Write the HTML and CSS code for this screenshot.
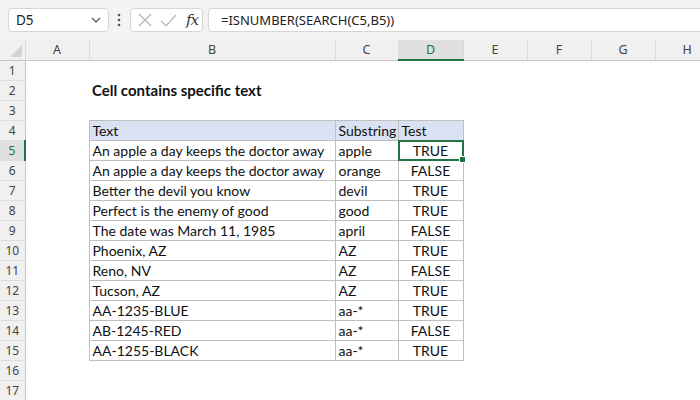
FILE: index.html
```html
<!DOCTYPE html>
<html lang="en">
<head>
  <meta charset="UTF-8">
  <title>Cell contains specific text</title>
  <link rel="stylesheet" href="styles.css">
</head>
<body>
  <div class="toolbar">
    <div class="namebox">
      <span>D5</span>
      <svg class="chevron" width="10" height="6" viewBox="0 0 10 6"><path d="M1 1l4 4 4-4" fill="none" stroke="#555" stroke-width="1.2"/></svg>
    </div>
    <svg class="dots" width="4" height="14" viewBox="0 0 4 14"><circle cx="2" cy="2" r="1.3"/><circle cx="2" cy="7" r="1.3"/><circle cx="2" cy="12" r="1.3"/></svg>
    <div class="fbuttons">
      <svg width="14" height="14" viewBox="0 0 14 14"><path d="M1 1l12 12M13 1L1 13" stroke="#b4b4b4" stroke-width="1.2" fill="none"/></svg>
      <svg width="17" height="13" viewBox="0 0 17 13"><path d="M1 7l5 5L16 1" stroke="#b4b4b4" stroke-width="1.2" fill="none"/></svg>
      <span class="fx">fx</span>
    </div>
    <div class="formula">=ISNUMBER(SEARCH(C5,B5))</div>
  </div>

  <table class="sheet">
    <colgroup>
      <col style="width:25px"><col style="width:64px"><col style="width:246px"><col style="width:63px">
      <col style="width:65px"><col style="width:64px"><col style="width:64px"><col style="width:64px"><col style="width:64px">
    </colgroup>
    <thead>
      <tr>
        <th class="corner"><svg width="12" height="12" viewBox="0 0 12 12"><path d="M12 0V12H0z" fill="#d4d4d4"/></svg></th>
        <th>A</th><th>B</th><th>C</th><th class="active">D</th><th>E</th><th>F</th><th>G</th><th>H</th>
      </tr>
    </thead>
    <tbody>
      <tr><th>1</th><td></td><td></td><td></td><td></td></tr>
      <tr><th>2</th><td></td><td class="title">Cell contains specific text</td><td></td><td></td></tr>
      <tr><th>3</th><td></td><td></td><td></td><td></td></tr>
      <tr><th>4</th><td></td><td class="t head">Text</td><td class="t head">Substring</td><td class="t head">Test</td></tr>
      <tr><th class="active">5</th><td></td><td class="t">An apple a day keeps the doctor away</td><td class="t">apple</td><td class="t c sel">TRUE</td></tr>
      <tr><th>6</th><td></td><td class="t">An apple a day keeps the doctor away</td><td class="t">orange</td><td class="t c">FALSE</td></tr>
      <tr><th>7</th><td></td><td class="t">Better the devil you know</td><td class="t">devil</td><td class="t c">TRUE</td></tr>
      <tr><th>8</th><td></td><td class="t">Perfect is the enemy of good</td><td class="t">good</td><td class="t c">TRUE</td></tr>
      <tr><th>9</th><td></td><td class="t">The date was March 11, 1985</td><td class="t">april</td><td class="t c">FALSE</td></tr>
      <tr><th>10</th><td></td><td class="t">Phoenix, AZ</td><td class="t">AZ</td><td class="t c">TRUE</td></tr>
      <tr><th>11</th><td></td><td class="t">Reno, NV</td><td class="t">AZ</td><td class="t c">FALSE</td></tr>
      <tr><th>12</th><td></td><td class="t">Tucson, AZ</td><td class="t">AZ</td><td class="t c">TRUE</td></tr>
      <tr><th>13</th><td></td><td class="t">AA-1235-BLUE</td><td class="t">aa-*</td><td class="t c">TRUE</td></tr>
      <tr><th>14</th><td></td><td class="t">AB-1245-RED</td><td class="t">aa-*</td><td class="t c">FALSE</td></tr>
      <tr><th>15</th><td></td><td class="t">AA-1255-BLACK</td><td class="t">aa-*</td><td class="t c">TRUE</td></tr>
      <tr><th>16</th><td></td><td></td><td></td><td></td></tr>
      <tr><th>17</th><td></td><td></td><td></td><td></td></tr>
    </tbody>
  </table>
</body>
</html>
```

FILE: styles.css
```css
body {
  margin: 0;
  width: 700px;
  height: 400px;
  overflow: hidden;
  background-color: #fff;
  font-family: "Noto Sans", "Open Sans", sans-serif;
  color: #222;
}

/* formula bar */
.toolbar {
  display: flex;
  align-items: center;
  height: 40px;
  padding: 0 0 0 8px;
  box-sizing: border-box;
  background-color: #f3f3f3;
}

.namebox,
.fbuttons,
.formula {
  height: 24px;
  box-sizing: border-box;
  background-color: #fff;
  border: 1px solid #d6d6d6;
  border-radius: 4px;
  display: flex;
  align-items: center;
}

.namebox {
  width: 101px;
  padding: 0 7px;
  justify-content: space-between;
  font-size: 13.5px;
}

.dots {
  fill: #555;
  margin: 0 9px 0 8px;
}

.fbuttons {
  width: 73px;
  padding: 0 4px 0 7px;
  justify-content: space-between;
}

.fx {
  font-family: "DejaVu Serif", "Liberation Serif", serif;
  font-style: italic;
  font-size: 15px;
  color: #333;
  letter-spacing: -1px;
}

.formula {
  flex: 1;
  margin-left: 5px;
  margin-right: -10px;
  padding-left: 12px;
  font-size: 13px;
}

/* grid */
.sheet {
  border-collapse: collapse;
  table-layout: fixed;
  width: 719px;
  font-family: "Lato", "Liberation Sans", sans-serif;
  font-size: 14px;
}

.sheet th {
  font-family: "Noto Sans", "Open Sans", sans-serif;
  font-weight: normal;
  color: #444;
  background-color: #f0f0f0;
  padding: 0;
}

.sheet thead th {
  height: 19px;
  font-size: 12.5px;
  border-left: 1px solid #dadada;
  border-bottom: 1px solid #c6c6c6;
}

.sheet thead th:first-child {
  border-left: none;
}

.sheet th.corner {
  text-align: right;
  vertical-align: bottom;
  line-height: 0;
}

.corner svg {
  margin: 0 3px 3px 0;
}

.sheet tbody th {
  height: 19px;
  font-size: 12px;
  border-right: 1px solid #c6c6c6;
  border-bottom: 1px solid #dedede;
}

.sheet th.active {
  background-color: #e0e0e0;
  color: #217346;
}

.sheet thead th.active {
  border-bottom: 2px solid #217346;
}

.sheet tbody th.active {
  border-right: 2px solid #217346;
}

.sheet td {
  padding: 0 3px;
  height: 19px;
  white-space: nowrap;
  color: #111;
}

.title {
  font-weight: bold;
  font-size: 15px;
}

.t {
  border: 1px solid #bfbfbf;
}

.head {
  background-color: #d9e1f2;
}

.c {
  text-align: center;
}

.sel {
  position: relative;
}

/* active cell box and fill handle */
.sel::before {
  content: "";
  position: absolute;
  left: -1px;
  top: -1px;
  right: -1px;
  bottom: -1px;
  border: 2px solid #217346;
}

.sel::after {
  content: "";
  position: absolute;
  right: -3px;
  bottom: -3px;
  width: 5px;
  height: 5px;
  background-color: #217346;
  border: 1px solid #fff;
}
```
